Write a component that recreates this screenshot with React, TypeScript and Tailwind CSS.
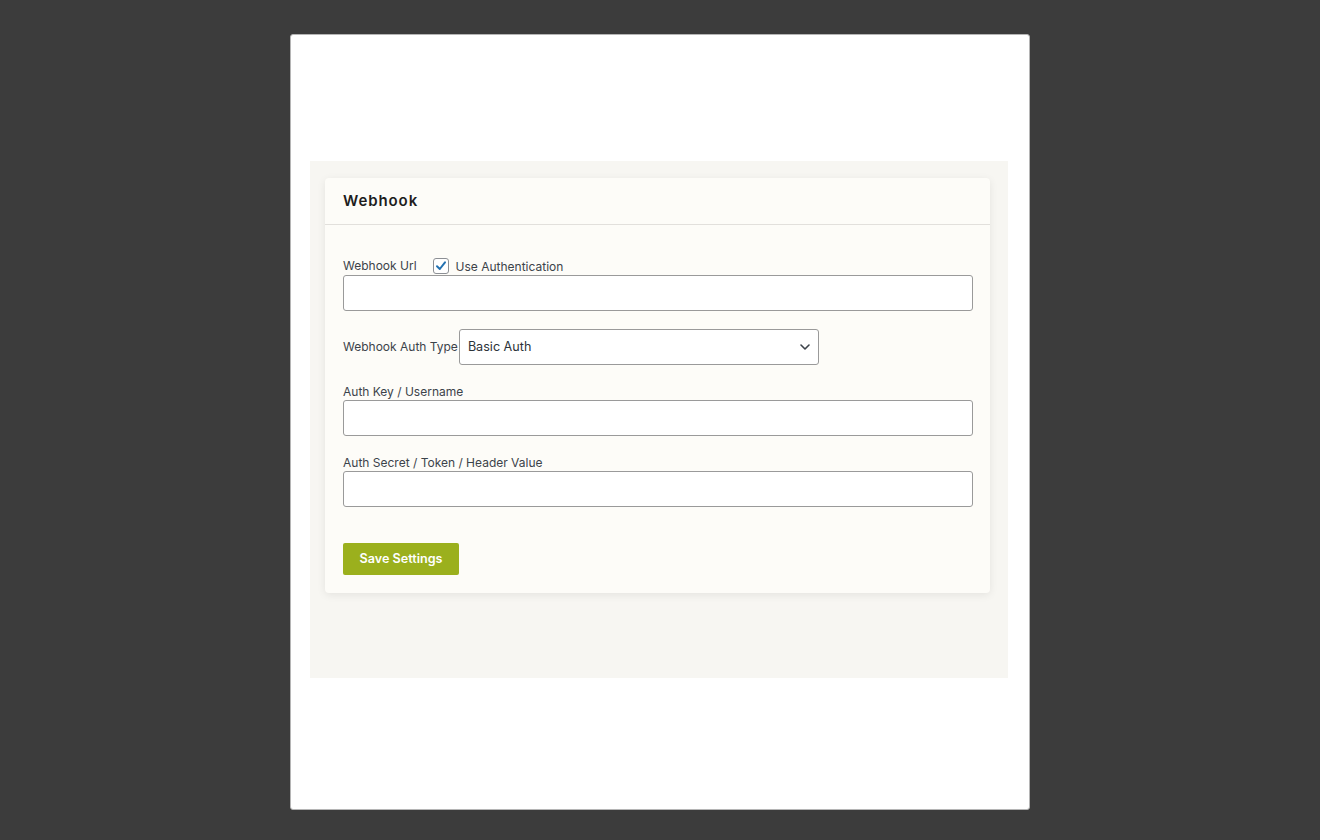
import React from "react";

export default function App() {
  return (
    <div
      className="w-[1320px] h-[840px] bg-[#3c3c3c] flex justify-center pt-[34px]"
      style={{ fontFamily: "Inter, 'Noto Sans', sans-serif" }}
    >
      <div className="w-[740px] h-[776px] bg-white border border-[#b5b5b5] rounded-[3px] pl-[19px] pr-[21px] pt-[126px]">
        <div className="h-[517px] bg-[#f7f6f2] pl-[15px] pr-[18px] pt-[17px]">
          <div className="bg-[#fdfcf8] rounded-[4px] shadow-[0_2px_8px_rgba(0,0,0,0.08)]">
            <div className="h-[47px] border-b border-[#e2e0dc] px-[18px] flex items-center">
              <h2 className="text-[15px] font-semibold tracking-[0.06em] text-[#1d1d1d]">Webhook</h2>
            </div>
            <div className="px-[18px] pt-[32px] pb-[18px] text-[12px] text-[#3c434a]">
              <div className="flex items-center h-[18px]">
                <span>Webhook Url</span>
                <span className="ml-[16px] w-[16px] h-[16px] rounded-[3px] border border-[#8c8f94] bg-white flex items-center justify-center">
                  <svg width="12" height="12" viewBox="0 0 12 12">
                    <path d="M2 6.3 L4.8 9 L10 2.4" fill="none" stroke="#2271b1" strokeWidth="2" strokeLinecap="round" strokeLinejoin="round" />
                  </svg>
                </span>
                <span className="ml-[7px] mt-[2px]">Use Authentication</span>
              </div>
              <div className="h-[36px] w-[630px] bg-white border border-[#9a9a9a] rounded-[3px]" />
              <div className="mt-[18px] flex items-center">
                <span>Webhook Auth Type</span>
                <div className="ml-[1px] h-[36px] w-[360px] bg-white border border-[#9a9a9a] rounded-[3px] flex items-center justify-between pl-[8px] pr-[6px]">
                  <span className="text-[12.6px] text-[#2c3338]">Basic Auth</span>
                  <svg width="14" height="14" viewBox="0 0 14 14">
                    <path d="M3 5 L7 9 L11 5" fill="none" stroke="#3c434a" strokeWidth="1.6" strokeLinecap="round" strokeLinejoin="round" />
                  </svg>
                </div>
              </div>
              <div className="mt-[19px] leading-[15px]">Auth Key / Username</div>
              <div className="mt-[1px] h-[36px] w-[630px] bg-white border border-[#9a9a9a] rounded-[3px]" />
              <div className="mt-[19px] leading-[15px]">Auth Secret / Token / Header Value</div>
              <div className="mt-[1px] h-[36px] w-[630px] bg-white border border-[#9a9a9a] rounded-[3px]" />
              <button className="block mt-[36px] h-[32px] w-[116px] bg-[#9bb01d] rounded-[2px] text-white text-[12.6px] font-semibold">
                Save Settings
              </button>
            </div>
          </div>
        </div>
      </div>
    </div>
  );
}
